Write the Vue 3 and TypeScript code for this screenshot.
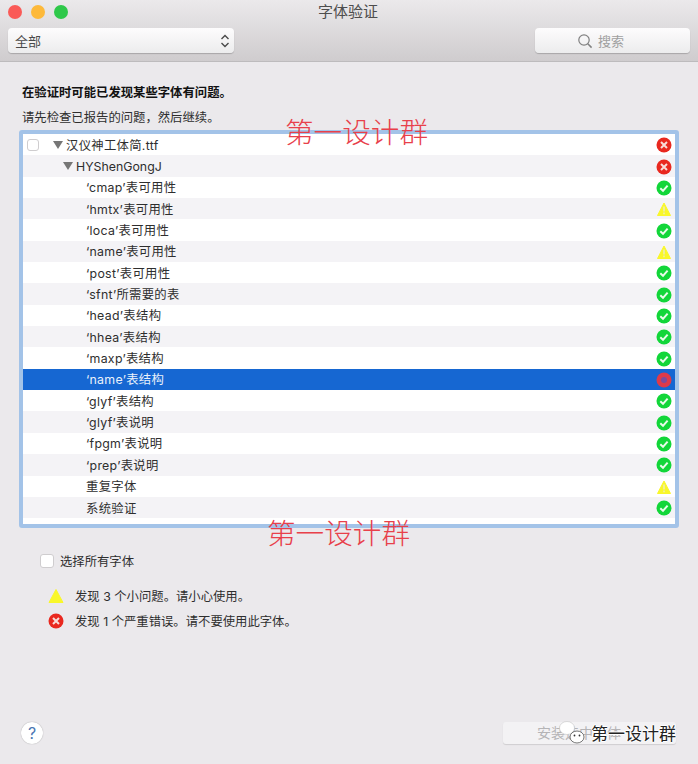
<script setup lang="ts">
type Status = 'ok' | 'warn' | 'error'

interface Row {
  label: string
  status: Status
  level: number
  selected?: boolean
}

const rows: Row[] = [
  { label: '汉仪神工体简.ttf', status: 'error', level: 0 },
  { label: 'HYShenGongJ', status: 'error', level: 1 },
  { label: '‘cmap’表可用性', status: 'ok', level: 2 },
  { label: '‘hmtx’表可用性', status: 'warn', level: 2 },
  { label: '‘loca’表可用性', status: 'ok', level: 2 },
  { label: '‘name’表可用性', status: 'warn', level: 2 },
  { label: '‘post’表可用性', status: 'ok', level: 2 },
  { label: '‘sfnt’所需要的表', status: 'ok', level: 2 },
  { label: '‘head’表结构', status: 'ok', level: 2 },
  { label: '‘hhea’表结构', status: 'ok', level: 2 },
  { label: '‘maxp’表结构', status: 'ok', level: 2 },
  { label: '‘name’表结构', status: 'error', level: 2, selected: true },
  { label: '‘glyf’表结构', status: 'ok', level: 2 },
  { label: '‘glyf’表说明', status: 'ok', level: 2 },
  { label: '‘fpgm’表说明', status: 'ok', level: 2 },
  { label: '‘prep’表说明', status: 'ok', level: 2 },
  { label: '重复字体', status: 'warn', level: 2 },
  { label: '系统验证', status: 'ok', level: 2 },
]
</script>

<template>
  <div class="window">
    <header class="titlebar">
      <div class="title-row">
        <span class="light red"></span>
        <span class="light yellow"></span>
        <span class="light green"></span>
        <span class="title">字体验证</span>
      </div>
      <div class="toolbar">
        <div class="select">
          <span>全部</span>
          <svg width="10" height="16" viewBox="0 0 10 16" fill="none" stroke="#4a4a4a" stroke-width="1.4">
            <path d="M1.5 6 5 2.5 8.5 6" />
            <path d="M1.5 10 5 13.5 8.5 10" />
          </svg>
        </div>
        <div class="search">
          <svg width="16" height="16" viewBox="0 0 16 16" fill="none" stroke="#808080" stroke-width="1.2">
            <circle cx="7" cy="7" r="5.2" />
            <path d="M10.8 10.8 14.6 14.6" stroke-width="1.5" />
          </svg>
          <span>搜索</span>
        </div>
      </div>
    </header>

    <main class="content">
      <p class="heading">在验证时可能已发现某些字体有问题。</p>
      <p class="subheading">请先检查已报告的问题，然后继续。</p>

      <div class="list">
        <div
          v-for="(row, i) in rows"
          :key="i"
          :class="['row', 'level-' + row.level, { selected: row.selected }]"
        >
          <span v-if="row.level === 0" class="checkbox small"></span>
          <span v-if="row.level < 2" class="arrow"></span>
          <span class="label">{{ row.label }}</span>
          <span class="status">
            <svg v-if="row.status === 'ok'" width="16" height="16" viewBox="0 0 16 16">
              <circle cx="8" cy="8" r="7.5" fill="#12d639" />
              <path d="M4.3 8.3 7 10.8 11.6 5.6" fill="none" stroke="#e8fbe9" stroke-width="2" />
            </svg>
            <svg v-else-if="row.status === 'warn'" width="16" height="16" viewBox="0 0 16 16">
              <path d="M8 2 14.5 14.5H1.5Z" fill="#f9f72a" stroke="#f9f72a" stroke-linejoin="round" />
              <path d="M8 5.5V10.5M8 11.6V13.2" stroke="#eeeeb0" stroke-width="1.6" />
            </svg>
            <svg v-else-if="row.selected" width="16" height="16" viewBox="0 0 16 16">
              <circle cx="8" cy="8" r="7.5" fill="#dd3a4a" />
              <circle cx="8" cy="8" r="3" fill="#7d4a9c" />
            </svg>
            <svg v-else width="16" height="16" viewBox="0 0 16 16">
              <circle cx="8" cy="8" r="7.5" fill="#e9281f" />
              <path d="M5 5 11 11M11 5 5 11" stroke="#f8dcd8" stroke-width="2" />
            </svg>
          </span>
        </div>
      </div>

      <label class="select-all">
        <span class="checkbox"></span>
        <span>选择所有字体</span>
      </label>

      <div class="legend">
        <div class="legend-row">
          <svg width="16" height="16" viewBox="0 0 16 16">
            <path d="M8 1.5 15 14.5H1Z" fill="#f9f72a" stroke="#f9f72a" stroke-linejoin="round" />
          </svg>
          <span>发现 3 个小问题。请小心使用。</span>
        </div>
        <div class="legend-row">
          <svg width="16" height="16" viewBox="0 0 16 16">
            <circle cx="8" cy="8" r="7.5" fill="#e9281f" />
            <path d="M5 5 11 11M11 5 5 11" stroke="#f8dcd8" stroke-width="2" />
          </svg>
          <span>发现 1 个严重错误。请不要使用此字体。</span>
        </div>
      </div>
    </main>

    <footer class="footer">
      <span class="help">?</span>
      <div class="install">安装选中字体</div>
    </footer>

    <span class="mark mark-top">第一设计群</span>
    <span class="mark mark-bottom">第一设计群</span>
    <div class="wechat">
      <svg width="33" height="28" viewBox="0 0 33 28">
        <ellipse cx="9" cy="10" rx="7.5" ry="6.5" fill="#fff" stroke="#bbb" stroke-width=".5" />
        <ellipse cx="19" cy="19" rx="7" ry="6" fill="#fff" stroke="#555" stroke-width=".8" />
        <circle cx="16.5" cy="17.5" r=".9" fill="#333" />
        <circle cx="21.5" cy="17.5" r=".9" fill="#333" />
      </svg>
      <span>第一设计群</span>
    </div>
  </div>
</template>

<style>
html,
body {
  margin: 0;
}
</style>

<style scoped>
.window {
  background: #ebe9ec;
  color: #2e2e2e;
  display: flex;
  flex-direction: column;
  font-family: Inter, "Noto Sans CJK SC", sans-serif;
  font-size: 12.35px;
  height: 764px;
  overflow: hidden;
  position: relative;
  width: 698px;
}

.titlebar {
  background: linear-gradient(#ebe9eb, #cfccce);
  border-bottom: 1px solid #bdbbbd;
  box-sizing: border-box;
  height: 62px;
  padding: 4px 8px 0;
}

.title-row {
  align-items: center;
  display: flex;
  gap: 9px;
  height: 16px;
  position: relative;
}

.light {
  border-radius: 50%;
  height: 14px;
  width: 14px;
}

.red {
  background: #fa5a57;
}

.yellow {
  background: #fdb93a;
}

.green {
  background: #2fc84a;
}

.title {
  color: #4d4d4d;
  font-size: 15px;
  left: 0;
  line-height: 18px;
  position: absolute;
  right: 2px;
  text-align: center;
  top: -1px;
}

.toolbar {
  display: flex;
  justify-content: space-between;
  margin-top: 8px;
}

.select,
.search {
  align-items: center;
  background: linear-gradient(#fdfcfd, #ececed);
  border-radius: 4px;
  box-shadow: 0 1px 1px rgba(0, 0, 0, .2);
  box-sizing: border-box;
  display: flex;
  height: 25px;
}

.select {
  color: #4a4a4a;
  font-size: 13px;
  justify-content: space-between;
  padding: 0 4px 0 7px;
  width: 226px;
}

.search {
  color: #a0a0a0;
  font-size: 13px;
  gap: 5px;
  justify-content: center;
  padding-right: 24px;
  width: 155px;
}

.content {
  flex: 1;
  padding: 0 19px;
}

.heading {
  color: #111;
  font-weight: 700;
  line-height: 17px;
  margin: 22px 0 0 3px;
}

.subheading {
  line-height: 17px;
  margin: 8px 0 0 3px;
}

.list {
  background: #fff;
  border: 4px solid #a3c3e8;
  border-radius: 3px;
  box-sizing: border-box;
  height: 398px;
  margin-top: 4px;
  width: 660px;
}

.row {
  align-items: center;
  box-sizing: border-box;
  display: flex;
  height: 21.35px;
  position: relative;
}

.row:nth-child(even) {
  background: #f4f3f6;
}

.row.selected {
  background: #1667d2;
  color: #eaf2fb;
}

.level-0 {
  letter-spacing: .3px;
  padding-left: 4px;
}

.level-1 {
  padding-left: 40px;
}

.level-2 {
  letter-spacing: .3px;
  padding-left: 63px;
}

.arrow {
  border-left: 5px solid transparent;
  border-right: 5px solid transparent;
  border-top: 8px solid #767676;
  height: 0;
  margin-right: 3px;
  width: 0;
}

.level-0 .arrow {
  margin-left: 14px;
}

.status {
  display: flex;
  position: absolute;
  right: 3px;
  top: 3.3px;
}

.checkbox {
  background: #fff;
  border: 1px solid #cfcdcf;
  border-radius: 3px;
  box-sizing: border-box;
  display: block;
  height: 14px;
  width: 14px;
}

.checkbox.small {
  height: 12px;
  width: 12px;
}

.select-all {
  align-items: center;
  display: flex;
  gap: 6px;
  margin: 24px 0 0 21px;
}

.legend {
  display: flex;
  flex-direction: column;
  gap: 8px;
  margin: 17px 0 0 29px;
}

.legend-row {
  align-items: center;
  display: flex;
  gap: 11px;
  height: 17px;
}

.footer {
  align-items: center;
  display: flex;
  justify-content: space-between;
  padding: 0 22px 20px 21px;
}

.help {
  align-items: center;
  background: #fff;
  border-radius: 50%;
  box-shadow: 0 0 1px rgba(0, 0, 0, .4);
  color: #4a77b4;
  display: flex;
  font-size: 16px;
  height: 22px;
  justify-content: center;
  width: 22px;
}

.install {
  background: #f3f2f4;
  border-radius: 3px;
  box-shadow: 0 1px 1px rgba(0, 0, 0, .12);
  box-sizing: border-box;
  color: #b5b4b6;
  font-size: 14px;
  height: 22px;
  line-height: 22px;
  padding-left: 34px;
  width: 173px;
}

.mark {
  color: #e8404a;
  font-family: "Liberation Serif", "Noto Sans CJK SC", serif;
  font-size: 28.6px;
  font-weight: 300;
  line-height: 1;
  position: absolute;
}

.mark-top {
  left: 285px;
  top: 120px;
}

.mark-bottom {
  left: 267px;
  top: 521px;
}

.wechat {
  align-items: center;
  color: #222;
  display: flex;
  font-size: 17px;
  left: 558px;
  position: absolute;
  text-shadow: 1px 0 #fff, -1px 0 #fff, 0 1px #fff, 0 -1px #fff;
  top: 718px;
}
</style>
